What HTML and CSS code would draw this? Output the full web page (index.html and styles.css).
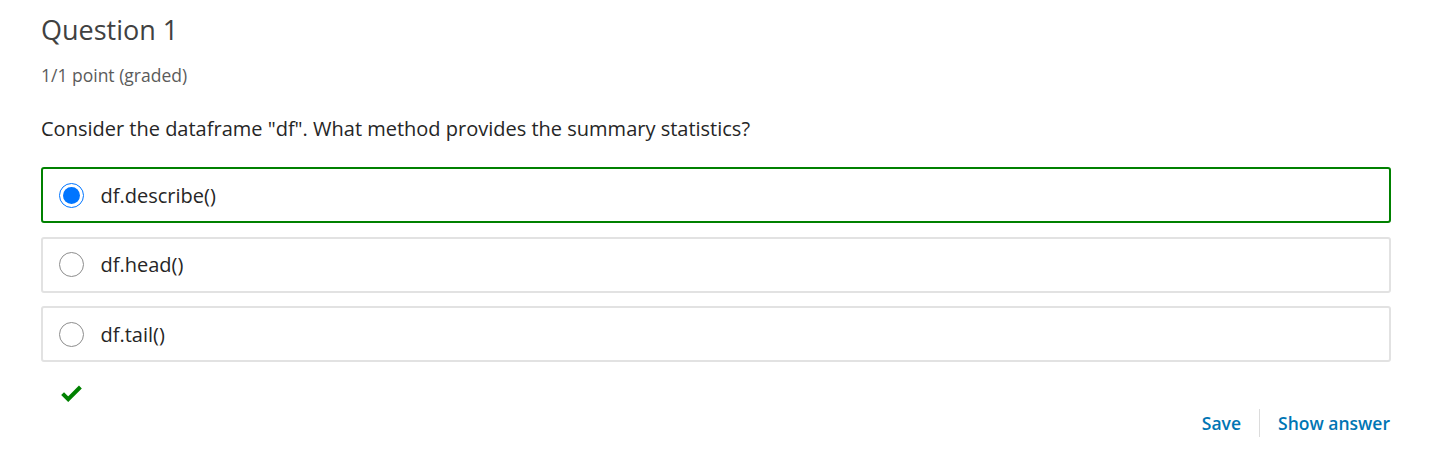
FILE: index.html
```html
<!DOCTYPE html>
<html>
<head>
<meta charset="utf-8">
<link rel="stylesheet" href="styles.css">
</head>
<body>
<div class="problem">
  <h3 class="title">Question 1</h3>
  <div class="points">1/1 point (graded)</div>
  <p class="prompt">Consider the dataframe "df". What method provides the summary statistics?</p>
  <div class="choices">
    <label class="choice correct">
      <span class="radio checked"></span>
      <span class="label">df.describe()</span>
    </label>
    <label class="choice">
      <span class="radio"></span>
      <span class="label">df.head()</span>
    </label>
    <label class="choice">
      <span class="radio"></span>
      <span class="label">df.tail()</span>
    </label>
  </div>
  <div class="status">
    <svg class="check" width="21" height="17" viewBox="0 0 21 17">
      <path d="M1.6 8.6 L7.2 14.2 L19.4 2" fill="none" stroke="#008100" stroke-width="4"/>
    </svg>
  </div>
  <div class="actions">
    <span class="action">Save</span>
    <span class="sep"></span>
    <span class="action">Show answer</span>
  </div>
</div>
</body>
</html>
```
FILE: styles.css
```css
body {
  margin: 0;
  background: #fff;
  font-family: "Open Sans", "DejaVu Sans", sans-serif;
  color: #313131;
}
.problem {
  padding: 12px 59px 0 41px;
}
.title {
  margin: 0;
  font-size: 27px;
  font-weight: 400;
  color: #414141;
  line-height: 36px;
}
.points {
  margin-top: 15px;
  font-size: 17.5px;
  color: #5b5b5b;
  line-height: 24px;
}
.prompt {
  margin: 27px 0 0 0;
  font-size: 20px;
  line-height: 30px;
  color: #262626;
}
.choices {
  margin-top: 23px;
  display: flex;
  flex-direction: column;
  gap: 13.5px;
}
.choice {
  display: flex;
  align-items: center;
  height: 52px;
  border: 2px solid #e2e2e2;
  border-radius: 3px;
  padding-left: 15.5px;
}
.choice.correct {
  border-color: #008100;
}
.radio {
  width: 23px;
  height: 23px;
  border: 1.5px solid #8d8d8d;
  border-radius: 50%;
  box-sizing: content-box;
  display: inline-block;
  position: relative;
  flex: none;
}
.radio.checked {
  border-color: #0075ff;
}
.radio.checked::after {
  content: "";
  position: absolute;
  left: 3px;
  top: 3px;
  width: 17px;
  height: 17px;
  border-radius: 50%;
  background: #0075ff;
}
.label {
  margin-left: 17px;
  font-size: 20px;
  color: #262626;
}
.status {
  margin-top: 23px;
  padding-left: 20px;
  height: 17px;
}
.check {
  display: block;
}
.actions {
  display: flex;
  justify-content: flex-end;
  align-items: center;
  margin-top: 7px;
  padding-right: 1px;
  height: 28px;
}
.action {
  font-size: 17.5px;
  font-weight: 600;
  color: #0075b4;
}
.sep {
  width: 1px;
  height: 28px;
  background: #dcdcdc;
  margin: 0 18px;
}
```
